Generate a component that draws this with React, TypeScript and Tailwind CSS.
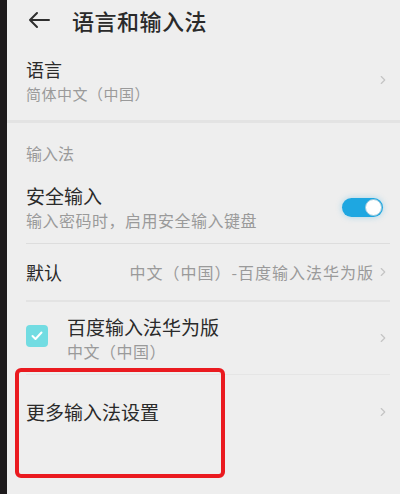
import { ChevronRight } from 'lucide-react';

const FONT = { fontFamily: '"Noto Sans CJK SC", "Noto Sans", sans-serif' };

function Chevron() {
  return <ChevronRight className="w-[14px] h-[14px] text-[#c4c4c4]" strokeWidth={2} />;
}

export default function App() {
  return (
    <div className="w-[400px] h-[494px] flex overflow-hidden bg-[#eeeeee]" style={FONT}>
      {/* phone bezel */}
      <div className="w-[7px] h-full bg-[#1d1a1c] flex-shrink-0" />

      <div className="flex-1 flex flex-col relative pl-[19px] pr-[10px] text-[#2a2a2a]">
        {/* header */}
        <div className="h-[40px] flex items-center gap-[22px] pl-[2px]">
          <svg width="22" height="18" viewBox="0 0 22 18" fill="none" stroke="#2e2e2e" strokeWidth="2" strokeLinecap="round" strokeLinejoin="round">
            <path d="M21 9H2M9 2L2 9l7 7" />
          </svg>
          <span className="text-[22px] leading-none font-medium tracking-[0.5px]">语言和输入法</span>
        </div>

        {/* 语言 */}
        <div className="h-[80px] flex items-center justify-between">
          <div className="flex flex-col gap-[6px] pt-[2px]">
            <span className="text-[18px] leading-[20px]">语言</span>
            <span className="text-[15px] leading-[18px] text-[#9a9a9a] tracking-[0.5px]">简体中文（中国）</span>
          </div>
          <Chevron />
        </div>
        <div className="h-[3px] -ml-[19px] -mr-[10px] bg-[#e3e3e3]" />

        {/* section header */}
        <div className="h-[52px] flex items-center pt-[8px]">
          <span className="text-[16px] text-[#9a9a9a]">输入法</span>
        </div>

        {/* 安全输入 */}
        <div className="h-[68px] flex items-center justify-between pb-[4px]">
          <div className="flex flex-col gap-[4px]">
            <span className="text-[19px] leading-[22px]">安全输入</span>
            <span className="text-[16px] leading-[18px] text-[#9a9a9a] tracking-[0.5px]">输入密码时，启用安全输入键盘</span>
          </div>
          <div className="w-[41px] h-[19px] rounded-full bg-[#1ea7e1] flex items-center justify-end pr-[1px] mr-[7px] shadow-[0_0_6px_rgba(30,167,225,0.35)]">
            <div className="w-[17px] h-[17px] rounded-full bg-white border border-[#9cc9dc]" />
          </div>
        </div>
        <div className="h-px bg-[#dddddd]" />

        {/* 默认 */}
        <div className="h-[56px] flex items-center justify-between">
          <span className="text-[18px]">默认</span>
          <div className="flex items-center gap-[2px]">
            <span className="text-[16px] text-[#9a9a9a] tracking-[1px]">中文（中国）-百度输入法华为版</span>
            <Chevron />
          </div>
        </div>
        <div className="h-[2px] bg-[#e3e3e3]" />

        {/* 百度输入法 */}
        <div className="h-[72px] flex items-center justify-between">
          <div className="flex items-center gap-[19px]">
            <div className="w-[22px] h-[22px] rounded-[4px] bg-[#72dce2] flex items-center justify-center -mt-[4px]">
              <svg width="12" height="10" viewBox="0 0 12 10" fill="none" stroke="white" strokeWidth="2" strokeLinecap="round" strokeLinejoin="round">
                <path d="M1.5 5l3 3 6-6.5" />
              </svg>
            </div>
            <div className="flex flex-col gap-[4px]">
              <span className="text-[19px] leading-[22px]">百度输入法华为版</span>
              <span className="text-[16px] leading-[18px] text-[#9a9a9a] tracking-[0.5px]">中文（中国）</span>
            </div>
          </div>
          <Chevron />
        </div>
        <div className="h-px bg-[#e5e5e5]" />

        {/* 更多输入法设置 */}
        <div className="h-[74px] flex items-center justify-between">
          <span className="text-[19px]">更多输入法设置</span>
          <Chevron />
        </div>

        {/* red annotation box */}
        <div className="absolute left-[8px] top-[368px] w-[210px] h-[110px] border-[4px] border-[#ea1a1f] rounded-[6px]" />
      </div>
    </div>
  );
}
